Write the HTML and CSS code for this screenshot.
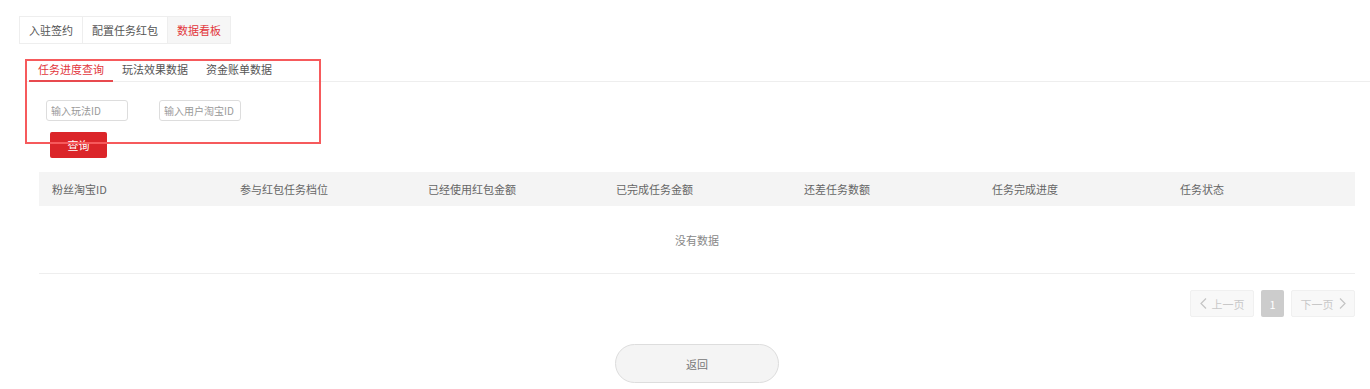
FILE: index.html
```html
<!DOCTYPE html>
<html lang="zh">
<head>
<meta charset="utf-8">
<link rel="stylesheet" href="styles.css">
</head>
<body>
<div class="page">
  <div class="top-tabs">
    <div class="top-tab">入驻签约</div>
    <div class="top-tab">配置任务红包</div>
    <div class="top-tab active">数据看板</div>
  </div>

  <div class="query-area">
    <div class="sub-tabs">
      <div class="sub-tab active">任务进度查询</div>
      <div class="sub-tab">玩法效果数据</div>
      <div class="sub-tab">资金账单数据</div>
    </div>
    <div class="filters">
      <input class="field" placeholder="输入玩法ID">
      <input class="field" placeholder="输入用户淘宝ID">
    </div>
    <button class="btn-query">查询</button>
    <div class="annot"></div>
  </div>

  <div class="table">
    <div class="thead">
      <div class="th">粉丝淘宝ID</div>
      <div class="th">参与红包任务档位</div>
      <div class="th">已经使用红包金额</div>
      <div class="th">已完成任务金额</div>
      <div class="th">还差任务数额</div>
      <div class="th">任务完成进度</div>
      <div class="th">任务状态</div>
    </div>
    <div class="empty">没有数据</div>
  </div>

  <div class="pager">
    <div class="pg-btn"><svg class="chev" width="7" height="11" viewBox="0 0 7 11"><path d="M6 0.5 L1 5.5 L6 10.5" fill="none" stroke="#c4c4c4" stroke-width="1.2"/></svg> 上一页</div>
    <div class="pg-num">1</div>
    <div class="pg-btn">下一页 <svg class="chev" width="7" height="11" viewBox="0 0 7 11"><path d="M1 0.5 L6 5.5 L1 10.5" fill="none" stroke="#c4c4c4" stroke-width="1.2"/></svg></div>
  </div>

  <div class="back-row">
    <button class="btn-back">返回</button>
  </div>
</div>
</body>
</html>
```

FILE: styles.css
```css
* { box-sizing: border-box; }
body {
  margin: 0;
  background: #fff;
  font-family: "Noto Sans CJK SC", "Microsoft YaHei", sans-serif;
  font-size: 11px;
  color: #666;
}
.page {
  padding: 16px 15px 0 19px;
}
.top-tabs {
  display: inline-flex;
  border: 1px solid #eee;
  height: 28px;
}
.top-tab {
  line-height: 26px;
  padding: 0 9px;
  color: #555;
  border-right: 1px solid #eee;
}
.top-tab:first-child { padding: 0 9px 0 9px; }
.top-tab:last-child { border-right: none; padding: 0 9px; }
.top-tab.active {
  background: #f6f6f6;
  color: #e2363c;
}
.query-area {
  position: relative;
  margin-top: 16px;
}
.sub-tabs {
  display: flex;
  padding-left: 4px;
  margin-left: 6px;
  margin-right: -15px;
  border-bottom: 1px solid #eee;
}
.sub-tab {
  padding: 0 9px;
  height: 22px;
  line-height: 18px;
  color: #555;
  border-bottom: 2px solid transparent;
  margin-bottom: -1px;
}
.sub-tab.active {
  color: #e2363c;
  border-bottom-color: #e84a4f;
}
.filters {
  display: flex;
  gap: 31px;
  padding-left: 27px;
  margin-top: 18px;
}
.field {
  width: 82px;
  height: 21px;
  border: 1px solid #ddd;
  border-radius: 3px;
  padding: 0 4px;
  font-family: inherit;
  font-size: 10px;
  color: #666;
  outline: none;
}
.field::placeholder { color: #999; }
.btn-query {
  display: block;
  margin: 11px 0 0 31px;
  width: 57px;
  height: 26px;
  border: none;
  border-radius: 2px;
  background: #db2529;
  color: #fff;
  font-family: inherit;
  font-size: 11px;
}
.annot {
  position: absolute;
  left: 6px;
  top: -1px;
  width: 296px;
  height: 85px;
  border: 2px solid #f65a5c;
  pointer-events: none;
}
.table {
  margin: 14px 0 0 20px;
}
.thead {
  display: grid;
  grid-template-columns: repeat(7, 1fr);
  background: #f4f4f4;
  height: 34px;
  align-items: center;
}
.th {
  padding-left: 13px;
  color: #666;
}
.empty {
  height: 68px;
  border-bottom: 1px solid #eee;
  display: flex;
  align-items: center;
  justify-content: center;
  color: #888;
}
.pager {
  display: flex;
  justify-content: flex-end;
  gap: 7px;
  margin-top: 16px;
}
.pg-btn {
  width: 64px;
  height: 27px;
  border: 1px solid #f0f0f0;
  border-radius: 2px;
  background: #f8f8f8;
  color: #c8c8c8;
  display: flex;
  align-items: center;
  justify-content: center;
  gap: 5px;
}
.pg-num {
  width: 23px;
  height: 27px;
  background: #cccccc;
  color: #fff;
  border-radius: 2px;
  display: flex;
  align-items: center;
  justify-content: center;
}
.back-row {
  display: flex;
  justify-content: center;
  margin: 27px 0 0 20px;
}
.btn-back {
  width: 164px;
  height: 39px;
  border: 1px solid #ddd;
  border-radius: 20px;
  background: #f4f4f4;
  color: #777;
  font-family: inherit;
  font-size: 11px;
}
```
